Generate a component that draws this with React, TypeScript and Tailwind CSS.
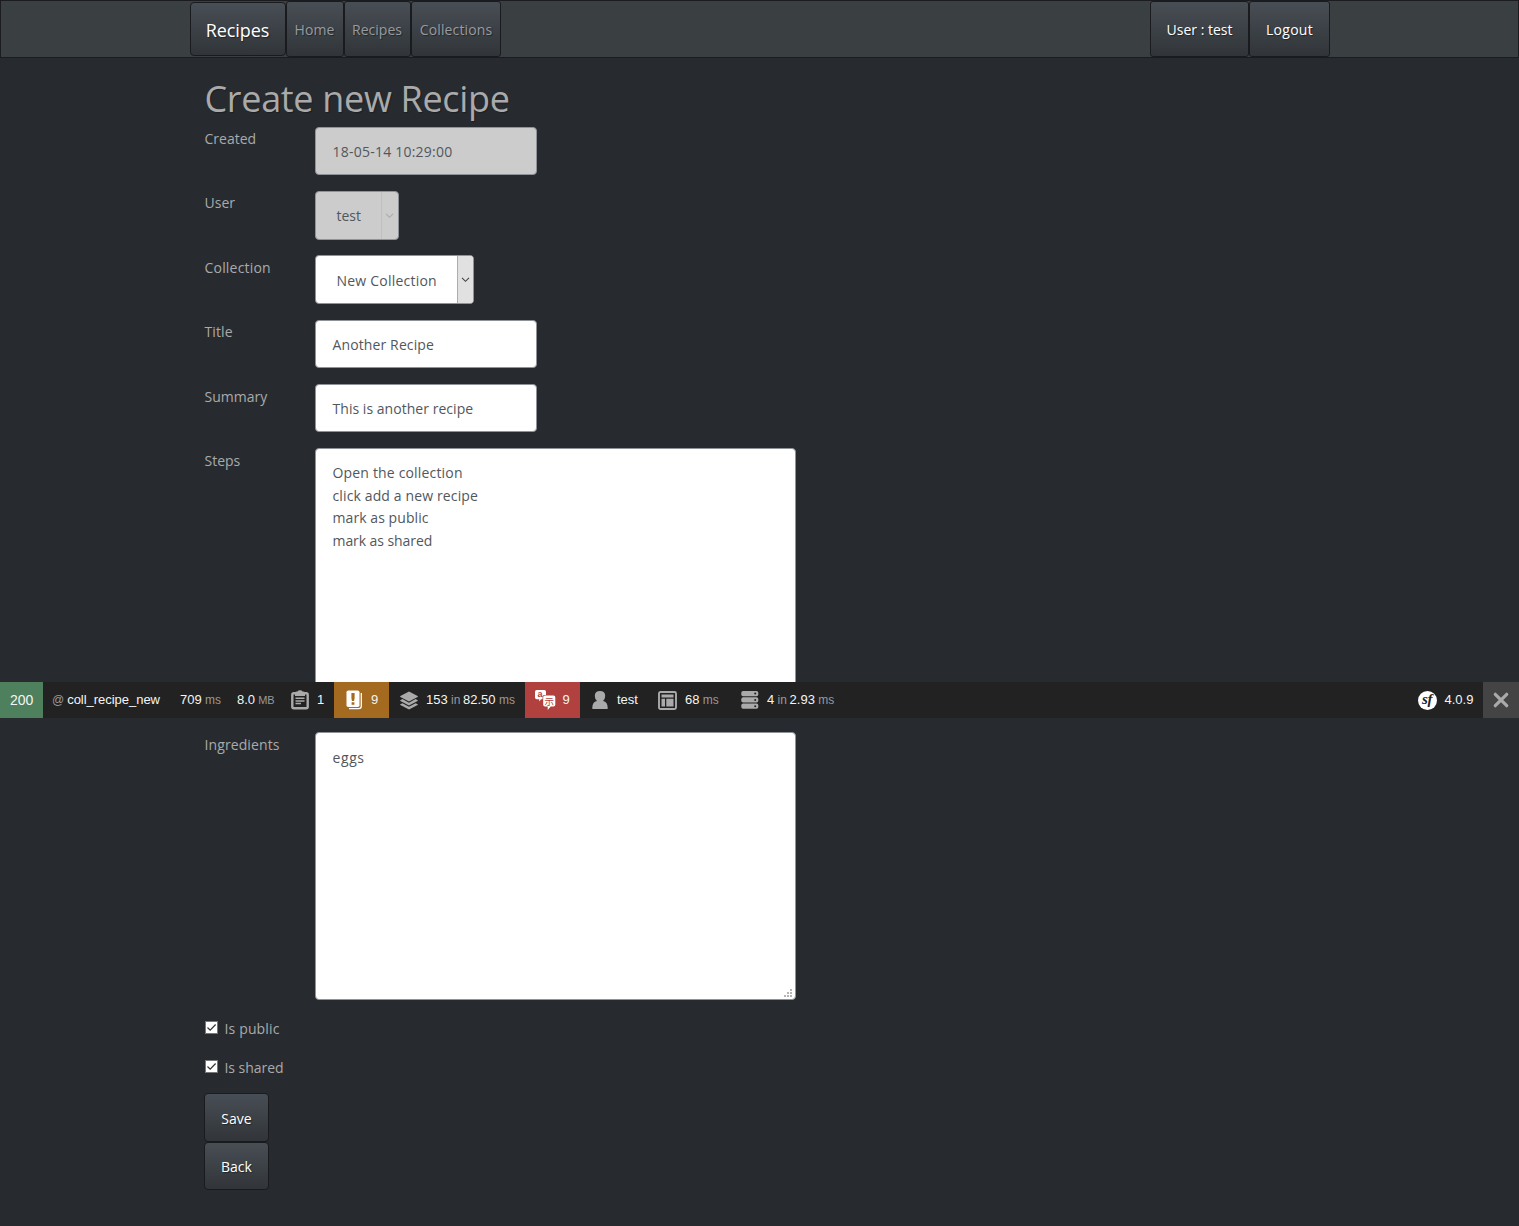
import React from "react";

const raised =
  "border border-[#191b1e] bg-[linear-gradient(#484e55,#3a3f44_60%,#313539)] [text-shadow:1px_1px_1px_rgba(0,0,0,0.4)]";

function Row({
  label,
  height,
  labelStyle = "pt-px",
  children,
}: {
  label: string;
  height: string;
  labelStyle?: string;
  children: React.ReactNode;
}) {
  return (
    <div className={`flex items-start ${height}`}>
      <label className={`w-[111px] shrink-0 pl-[0.5px] leading-[22px] ${labelStyle}`}>{label}</label>
      {children}
    </div>
  );
}

function Chevron() {
  return (
    <svg viewBox="0 0 9 6" className="h-[6px] w-[9px]" fill="none" stroke="currentColor" strokeWidth="1.1">
      <path d="M1 .8 4.5 4.3 8 .8" />
    </svg>
  );
}

function Check({ label, tracking }: { label: string; tracking: string }) {
  return (
    <label className={`flex h-[39px] items-start leading-[22px] ${tracking}`}>
      <span className="mt-[4px] mr-[7px] ml-[0.5px] flex size-[13px] items-center justify-center border border-[#777] bg-white">
        <svg viewBox="0 0 11 11" className="size-[11px]" fill="none" stroke="#333" strokeWidth="1.2">
          <path d="M1.5 5.5 4.2 8.2 9.6 2.5" />
        </svg>
      </span>
      <span className="pt-px">{label}</span>
    </label>
  );
}

const field = "rounded-[4px] border border-[#8d9399] bg-white text-[#52575c]";

function Grey({ children }: { children: React.ReactNode }) {
  return <span className="text-[12px] text-[#999]">{children}</span>;
}

function Toolbar() {
  return (
    <div className="absolute top-[682px] left-0 flex h-[36px] w-full items-stretch bg-[#222] font-['Liberation_Sans',Arial,sans-serif] text-[13px] leading-[36px] whitespace-pre text-[#f5f5f5]">
      <div className="w-[43px] bg-[#4f805d] pl-[10px] text-[14px]">200</div>
      <div className="w-[128px] pl-[9px]">
        <Grey>@</Grey><span className="ml-[3px] tracking-[-0.03px]">coll_recipe_new</span>
      </div>
      <div className="w-[57px] pl-[9px]">709<Grey> ms</Grey></div>
      <div className="w-[53px] pl-[9px]">8.0<span className="text-[11px] text-[#999]"> MB</span></div>
      <div className="flex w-[53px] items-center pl-[10px]">
        <svg viewBox="0 0 18 20" className="mr-[8px] h-[20px] w-[18px]" fill="none" stroke="#aaa">
          <rect x="1.3" y="3.3" width="15.4" height="14.9" rx="1.5" strokeWidth="2.4" />
          <path d="M4 6V3Q4 1.5 5.5 1.5h1Q7 .3 9 .3T11.5 1.5h1Q14 1.5 14 3V6Z" fill="#aaa" stroke="none" />
          <path d="M4.5 8.2h9M4.5 10.9h9M4.5 13.6h5.5" strokeWidth="1.5" />
        </svg>
        1
      </div>
      <div className="flex w-[55px] items-center bg-[#a46a1f] pl-[12px]">
        <svg viewBox="0 0 17 20" className="mr-[8px] h-[20px] w-[17px]">
          <rect x="0.5" y="0.5" width="13" height="16.5" rx="1.8" fill="#fff" />
          <path d="M15.3 3v13q0 2.6-2.6 2.6H3" fill="none" stroke="#fff" strokeWidth="1.3" />
          <path d="M5.4 3h3.2v5l-.5 3H5.9l-.5-3ZM5.6 12.2h2.8v2.5H5.6Z" fill="#a46a1f" />
        </svg>
        9
      </div>
      <div className="flex w-[136px] items-center pl-[11px]">
        <svg viewBox="0 0 18 19" className="mr-[8px] h-[19px] w-[18px]" fill="#aaa">
          <path d="m9 .5 8.6 4.6q.6.4 0 .8L9 10.4.4 5.9q-.6-.4 0-.8Z" />
          <path d="m2.4 8.1 6.6 3.6 6.6-3.6 2 1.1q.6.4 0 .8L9 14.4.4 10q-.6-.4 0-.8Z" />
          <path d="m2.4 12.2 6.6 3.6 6.6-3.6 2 1.1q.6.4 0 .8L9 18.6.4 14.1q-.6-.4 0-.8Z" />
        </svg>
        153<Grey> in </Grey><span className="-ml-[0.7px]">82.50</span><Grey> ms</Grey>
      </div>
      <div className="flex w-[55px] items-center bg-[#b0413e] pl-[10px]">
        <svg viewBox="0 0 21 20" className="mr-[6.5px] h-[20px] w-[21px] overflow-visible">
          <path d="M1.7 0h7.6Q11 0 11 1.7V5H9.2Q7.5 5 7.5 6.7V9.3H6L4.2 11.6V9.3H1.7Q0 9.3 0 7.6V1.7Q0 0 1.7 0Z" fill="#fff" />
          <path d="M10 5.4h8.5Q20.3 5.4 20.3 7.2v7.5q0 1.8-1.8 1.8h-2.8l-3 3.4v-3.4H10q-1.8 0-1.8-1.8V7.2Q8.2 5.4 10 5.4Z" fill="#fff" />
          <text x="2.5" y="7.3" fontSize="9" fontWeight="600" fill="#b0413e" fontFamily="Liberation Sans, sans-serif">a</text>
          <text x="9.5" y="14.7" fontSize="9.5" fill="#b0413e" fontFamily="Noto Sans CJK JP, sans-serif">示</text>
        </svg>
        9
      </div>
      <div className="flex w-[69px] items-center pl-[12px]">
        <svg viewBox="0 0 16 18" className="mr-[9px] h-[18px] w-[16px]" fill="#aaa">
          <path d="M8 0q5.200 0 5.200 5 0 3-2.200 5 4.800 1 4.800 7.300Q15.800 18 15 18H1Q.2 18 .2 17.300.2 11 5 10 2.800 8 2.800 5q0-5 5.200-5Z" />
        </svg>
        test
      </div>
      <div className="flex w-[82px] items-center pl-[9px]">
        <svg viewBox="0 0 19 19" className="mr-[8px] size-[19px]">
          <rect x="1" y="1" width="17" height="17" rx="1.5" fill="none" stroke="#aaa" strokeWidth="1.9" />
          <path d="M3.5 3.6h12v2.8h-12ZM3.5 7.8H7v7.8H3.5ZM8.3 7.8h7.2v7.8H8.3Z" fill="#aaa" />
        </svg>
        68<Grey> ms</Grey>
      </div>
      <div className="flex items-center pl-[10px]">
        <svg viewBox="0 0 18 18" className="mr-[8px] size-[18px]">
          {[0, 6.3, 12.6].map((y) => (
            <g key={y}>
              <rect x="0.3" y={y} width="17" height="5.2" rx="1.8" fill="#aaa" />
              <circle cx="14.2" cy={y + 2.6} r="1" fill="#222" />
            </g>
          ))}
        </svg>
        4<Grey> in </Grey><span className="-ml-[0.7px]">2.93</span><Grey> ms</Grey>
      </div>
      <div className="ml-auto flex w-[65px] items-center">
        <span className="mr-[7.5px] flex size-[19px] items-center justify-center rounded-full bg-white pr-px pb-[2px] font-['Liberation_Serif',serif] text-[15px] leading-none font-bold tracking-[-0.5px] text-[#222] italic">
          sf
        </span>
        4.0.9
      </div>
      <div className="flex w-[36px] items-center justify-center bg-[#444]">
        <svg viewBox="0 0 16 16" className="size-[16px]" stroke="#aaa" strokeWidth="3.2" strokeLinecap="round">
          <path d="m2.3 2.3 11.4 11.4M13.7 2.3 2.3 13.7" />
        </svg>
      </div>
    </div>
  );
}

export default function App() {
  return (
    <div className="relative h-[1226px] w-[1519px] overflow-hidden bg-[#272b30] font-['Open_Sans','Noto_Sans',sans-serif] text-[14px] text-[#aaa]">
      <nav className="flex h-[58px] items-center border border-[#1a1c1f] bg-[#3a3f42] pl-[189px]">
        <a className={`flex h-[54px] w-[96px] items-center justify-center rounded-[4px] pt-[2px] pr-px text-[18px] tracking-[-0.1px] text-white ${raised}`}>
          Recipes
        </a>
        <div className="flex h-[56px] text-[#989b9e]">
          <a className={`flex w-[58px] items-center justify-center rounded-[3px] pr-px tracking-[0.1px] ${raised}`}>Home</a>
          <a className={`flex w-[67px] items-center justify-center rounded-[3px] pr-px ${raised}`}>Recipes</a>
          <a className={`flex w-[90px] items-center justify-center rounded-[3px] tracking-[0.13px] ${raised}`}>Collections</a>
        </div>
        <div className="ml-auto flex h-[56px] pr-[188px] text-white">
          <a className={`flex w-[99px] items-center justify-center rounded-[3px] ${raised}`}>User : test</a>
          <a className={`flex w-[81px] items-center justify-center rounded-[3px] tracking-[0.3px] ${raised}`}>Logout</a>
        </div>
      </nav>

      <main className="pl-[204px]">
        <h1 className="h-[69px] pt-[18px] pl-[0.5px] text-[36px] leading-[45px] tracking-[-0.32px] [text-shadow:1px_1px_1px_rgba(0,0,0,0.3)]">
          Create new Recipe
        </h1>
        <Row label="Created" height="h-[64px]">
          <div className="flex h-[48px] w-[222px] items-center rounded-[4px] border border-[#8d9399] bg-[#ccc] pl-[16.5px] tracking-[0.23px] text-[#52575c]">
            18-05-14 10:29:00
          </div>
        </Row>
        <Row label="User" height="h-[64px]">
          <div className="flex h-[49px] w-[83.5px] items-center overflow-hidden rounded-[4px] border border-[#8d9399] bg-[#ccc] pl-[20.5px] text-[#52575c]">
            test
            <span className="ml-auto flex h-full w-[17px] items-center justify-center border-l border-[#c0c0c0] text-[#aaa]">
              <Chevron />
            </span>
          </div>
        </Row>
        <Row label="Collection" height="h-[65px]" labelStyle="pt-[2px] tracking-[0.2px]">
          <div className={`flex h-[49px] w-[159px] items-center overflow-hidden pl-[20.5px] ${field}`}>
            <span className="pt-[2px] tracking-[0.22px]">New Collection</span>
            <span className="ml-auto flex h-full w-[16.5px] items-center justify-center border-l border-[#adadad] bg-[#e1e1e1] text-[#444]">
              <Chevron />
            </span>
          </div>
        </Row>
        <Row label="Title" height="h-[64px]" labelStyle="pt-px tracking-[0.1px]">
          <div className={`flex h-[48px] w-[222px] items-center pl-[16.5px] tracking-[0.12px] ${field}`}>Another Recipe</div>
        </Row>
        <Row label="Summary" height="h-[64px]" labelStyle="pt-[2px]">
          <div className={`flex h-[48px] w-[222px] items-center pl-[16.5px] tracking-[0.04px] ${field}`}>This is another recipe</div>
        </Row>
        <Row label="Steps" height="h-[284px]" labelStyle="pt-[2px]">
          <div className={`flex h-[268px] w-[481px] flex-col pt-[13px] pl-[16.5px] leading-[22.5px] ${field}`}>
            <span className="tracking-[0.17px]">Open the collection</span>
            <span className="tracking-[0.13px]">click add a new recipe</span>
            <span className="tracking-[0.07px]">mark as public</span>
            <span className="tracking-[-0.07px]">mark as shared</span>
          </div>
        </Row>
        <Row label="Ingredients" height="h-[285px]" labelStyle="pt-[2px] tracking-[0.1px]">
          <div className={`flex h-[268px] w-[481px] justify-between pt-[14px] pl-[16.5px] leading-[22.5px] tracking-[0.6px] ${field}`}>
            eggs
            <svg viewBox="0 0 10 10" className="mr-[2px] mb-px size-[10px] self-end" fill="#b5b5b5">
              <path d="M7 1h2v2H7ZM4 4h2v2H4ZM7 4h2v2H7ZM1 7h2v2H1ZM4 7h2v2H4ZM7 7h2v2H7Z" />
            </svg>
          </div>
        </Row>
        <Check label="Is public" tracking="tracking-[0.15px]" />
        <Check label="Is shared" tracking="tracking-[-0.05px]" />
        <div className="-mt-[2px] flex w-[65px] flex-col text-white">
          <button className={`h-[49px] rounded-[4px] pt-px ${raised}`}>Save</button>
          <button className={`h-[48px] rounded-[4px] pt-px ${raised}`}>Back</button>
        </div>
      </main>
      <Toolbar />
    </div>
  );
}
